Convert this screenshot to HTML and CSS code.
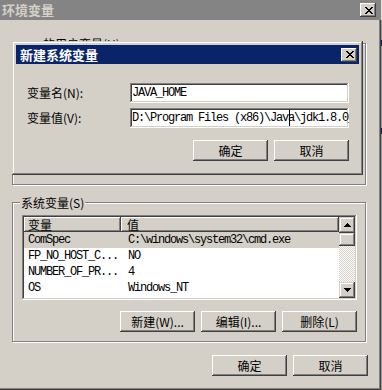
FILE: index.html
```html
<!DOCTYPE html>
<html lang="zh-CN">
<head>
  <meta charset="UTF-8">
  <meta name="viewport" content="width=device-width, initial-scale=1.0">
  <title>环境变量</title>
  <link rel="stylesheet" href="styles.css">
</head>
<body>
  <div class="screen">
    <div class="win">
      <div class="win-title">
        <span class="win-caption">环境变量</span>
        <span class="close-btn">
          <svg width="8" height="7" viewBox="0 0 8 7" shape-rendering="crispEdges"><path d="M0 0h2v1H0zM6 0h2v1H6zM1 1h2v1H1zM5 1h2v1H5zM2 2h4v1H2zM3 3h2v1H3zM2 4h4v1H2zM1 5h2v1H1zM5 5h2v1H5zM0 6h2v1H0zM6 6h2v1H6z" fill="#000"/></svg>
        </span>
      </div>

      <div class="win-body">
        <div class="group group-user">
          <span class="group-label label-user">的用户变量(U)</span>
        </div>

        <div class="group group-sys">
          <span class="group-label">系统变量(S)</span>
          <div class="list">
            <div class="list-view">
              <div class="list-head">
                <span class="head-cell">变量</span>
                <span class="head-cell head-value">值</span>
              </div>
              <div class="row selected"><span class="cell">ComSpec</span><span class="cell cell-value">C:\windows\system32\cmd.exe</span></div>
              <div class="row"><span class="cell">FP_NO_HOST_C...</span><span class="cell cell-value">NO</span></div>
              <div class="row"><span class="cell">NUMBER_OF_PR...</span><span class="cell cell-value">4</span></div>
              <div class="row"><span class="cell">OS</span><span class="cell cell-value">Windows_NT</span></div>
            </div>
            <div class="scrollbar">
              <span class="sb-btn">
                <svg width="7" height="4" viewBox="0 0 7 4" shape-rendering="crispEdges"><path d="M3 0h1v1h1v1h1v1h1v1H0V3h1V2h1V1h1z" fill="#000"/></svg>
              </span>
              <span class="sb-thumb"></span>
              <span class="sb-track"></span>
              <span class="sb-btn">
                <svg width="7" height="4" viewBox="0 0 7 4" shape-rendering="crispEdges"><path d="M0 0h7v1H6v1H5v1H4v1H3V3H2V2H1V1H0z" fill="#000"/></svg>
              </span>
            </div>
          </div>
          <div class="btn-row">
            <button class="btn">新建(W)...</button>
            <button class="btn">编辑(I)...</button>
            <button class="btn">删除(L)</button>
          </div>
        </div>

        <div class="btn-row footer">
          <button class="btn">确定</button>
          <button class="btn">取消</button>
        </div>
      </div>
    </div>
    <div class="side"></div>

    <div class="dialog">
      <div class="dlg-title">
        <span class="dlg-caption">新建系统变量</span>
        <span class="close-btn">
          <svg width="8" height="7" viewBox="0 0 8 7" shape-rendering="crispEdges"><path d="M0 0h2v1H0zM6 0h2v1H6zM1 1h2v1H1zM5 1h2v1H5zM2 2h4v1H2zM3 3h2v1H3zM2 4h4v1H2zM1 5h2v1H1zM5 5h2v1H5zM0 6h2v1H0zM6 6h2v1H6z" fill="#000"/></svg>
        </span>
      </div>
      <div class="dlg-body">
        <div class="form">
          <label class="form-label">变量名(N):</label>
          <div class="field">JAVA_HOME</div>
          <label class="form-label">变量值(V):</label>
          <div class="field">D:\Program Files (x86)\Java\jdk1.8.0_144<span class="ibeam"></span></div>
        </div>
        <div class="btn-row dlg-buttons">
          <button class="btn">确定</button>
          <button class="btn">取消</button>
        </div>
      </div>
    </div>
  </div>
</body>
</html>
```

FILE: styles.css
```css
* {
  box-sizing: border-box;
}

body {
  margin: 0;
  background: #d4d0c8;
  color: #000;
  font-family: "Noto Sans CJK SC", "Liberation Sans", sans-serif;
  font-size: 12px;
}

.screen {
  position: relative;
  width: 382px;
  height: 390px;
  overflow: hidden;
  display: flex;
}

/* outer window */
.win {
  width: 381px;
  height: 390px;
  background: #d4d0c8;
  box-shadow: inset -1px -1px #404040, inset -2px -2px #808080;
  display: flex;
  flex-direction: column;
}

.side {
  width: 1px;
  background: linear-gradient(to bottom, #e6e4df 0 20px, #9a9a9a 20px 40px, #0a246a 40px 46px, #9a9a9a 46px 128px, #0a246a 128px 134px, #9a9a9a 134px);
}

.win-title {
  height: 20px;
  background: #848484;
  display: flex;
  align-items: center;
  justify-content: space-between;
  padding: 0 5px 0 2px;
}

.win-caption {
  color: #d4d0c8;
  font-weight: bold;
  font-size: 13px;
  line-height: 20px;
}

.close-btn {
  width: 16px;
  height: 14px;
  background: #d4d0c8;
  box-shadow: inset -1px -1px #404040, inset 1px 1px #fff, inset -2px -2px #808080;
  display: flex;
  align-items: center;
  justify-content: center;
  padding-left: 1px;
}

.win-body {
  flex: 1;
  padding-left: 12px;
}

/* group boxes */
.group {
  position: relative;
  width: 354px;
  border: 1px solid #808080;
  box-shadow: 1px 1px 0 #fff, inset 1px 1px 0 #fff;
}

.group-label {
  position: absolute;
  top: -8px;
  left: 7px;
  padding: 0 1px;
  background: #d4d0c8;
  line-height: 15px;
}

.label-user {
  left: 29px;
}

.group-user {
  margin-top: 23px;
  height: 142px;
}

.group-sys {
  margin-top: 17px;
  height: 140px;
  padding: 12px 8px 0 9px;
}

/* list view */
.list {
  display: flex;
  height: 85px;
  padding: 2px;
  background: #fff;
  box-shadow: inset -1px -1px #fff, inset 1px 1px #808080, inset -2px -2px #d4d0c8, inset 2px 2px #404040;
}

.list-view {
  flex: 1;
  overflow: hidden;
}

.list-head {
  display: grid;
  grid-template-columns: 97px 1fr;
  height: 15px;
}

.head-cell {
  background: #d4d0c8;
  box-shadow: inset -1px -1px #404040, inset 1px 1px #fff, inset -2px -2px #808080;
  padding-left: 4px;
  line-height: 15px;
}

.head-value {
  padding-left: 6px;
}

.row {
  display: grid;
  grid-template-columns: 97px 1fr;
  height: 16px;
  line-height: 16px;
  font-family: "Liberation Mono", monospace;
  font-size: 12px;
  letter-spacing: -1.2px;
  white-space: nowrap;
}

.row.selected {
  background: #d4d0c8;
}

.cell {
  padding-left: 4px;
}

.cell-value {
  padding-left: 7px;
}

.scrollbar {
  width: 16px;
  display: flex;
  flex-direction: column;
}

.sb-btn {
  height: 16px;
  background: #d4d0c8;
  box-shadow: inset -1px -1px #404040, inset 1px 1px #d4d0c8, inset -2px -2px #808080, inset 2px 2px #fff;
  display: flex;
  align-items: center;
  justify-content: center;
}

.sb-thumb {
  height: 13px;
  background: #d4d0c8;
  box-shadow: inset -1px -1px #404040, inset 1px 1px #d4d0c8, inset -2px -2px #808080, inset 2px 2px #fff;
}

.sb-track {
  flex: 1;
  background: repeating-conic-gradient(#d4d0c8 0 25%, #fff 0 50%) 0 0 / 2px 2px;
}

/* buttons */
.btn-row {
  display: flex;
  justify-content: flex-end;
  gap: 6px;
  margin-top: 11px;
}

.footer {
  width: 356px;
  margin-top: 13px;
}

.btn {
  width: 75px;
  height: 21px;
  margin: 0;
  padding: 0;
  border: none;
  background: #d4d0c8;
  box-shadow: inset -1px -1px #404040, inset 1px 1px #fff, inset -2px -2px #808080, inset 2px 2px #d4d0c8;
  font-family: "Noto Sans CJK SC", "Liberation Sans", sans-serif;
  font-size: 12px;
  line-height: 21px;
  color: #000;
}

/* new variable dialog, over the window */
.dialog {
  position: absolute;
  left: 12px;
  top: 41px;
  width: 351px;
  height: 134px;
  padding: 4px;
  background: #d4d0c8;
  box-shadow: inset -1px -1px #404040, inset 1px 1px #d4d0c8, inset -2px -2px #808080, inset 2px 2px #fff;
}

.dlg-title {
  height: 19px;
  background: #0a246a;
  display: flex;
  align-items: center;
  justify-content: space-between;
  padding: 0 2px 0 4px;
}

.dlg-caption {
  color: #fff;
  font-weight: bold;
  font-size: 13px;
  line-height: 19px;
}

.dlg-body {
  padding: 19px 9px 0 11px;
}

.form {
  display: grid;
  grid-template-columns: 103px 219px;
  row-gap: 5px;
  align-items: center;
}

.form-label {
  line-height: 20px;
}

.field {
  position: relative;
  height: 20px;
  padding: 0 2px;
  background: #fff;
  box-shadow: inset -1px -1px #fff, inset 1px 1px #808080, inset -2px -2px #d4d0c8, inset 2px 2px #404040;
  font-family: "Liberation Mono", monospace;
  font-size: 12px;
  letter-spacing: -1.2px;
  line-height: 20px;
  white-space: nowrap;
  overflow: hidden;
}

.ibeam {
  position: absolute;
  left: 159px;
  top: 2px;
  width: 1px;
  height: 16px;
  background: #000;
}

.dlg-buttons {
  width: 322px;
  margin-top: 12px;
}
```
